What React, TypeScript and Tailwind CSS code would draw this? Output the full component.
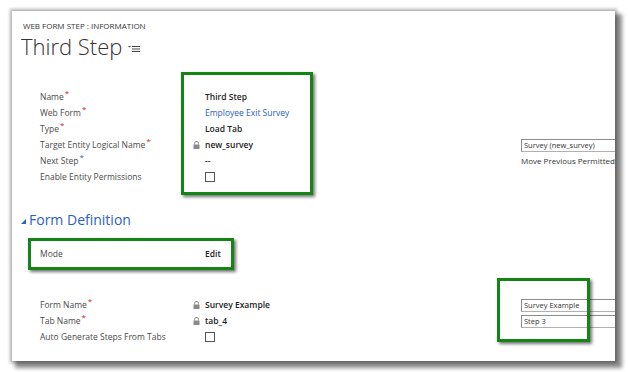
import React from "react";

const font = { fontFamily: '"Open Sans", "Noto Sans", Arial, sans-serif' };

function Lock() {
  return (
    <svg width="7" height="8" viewBox="0 0 7 8" className="block">
      <path d="M1.5 3.5V2.4a2 2 0 0 1 4 0v1.1" fill="none" stroke="#8a8a8a" strokeWidth="1" />
      <rect x="0.5" y="3.5" width="6" height="4.5" fill="#8a8a8a" />
    </svg>
  );
}

function Check() {
  return <div className="w-[10px] h-[10px] border border-[#555] bg-white" />;
}

function Req({ blue }: { blue?: boolean }) {
  return (
    <span className={`relative -top-[4px] ml-[1px] text-[8px] ${blue ? "text-[#2a62c0]" : "text-[#e0141e]"}`}>*</span>
  );
}

function Input({ text }: { text: string }) {
  return (
    <div className="w-[130px] h-[13px] border border-[#b0b0b0] border-t-[#8c8c8c] border-l-[#8c8c8c] bg-white text-[7.5px] leading-[11px] pl-[2px] text-[#333] whitespace-nowrap">
      {text}
    </div>
  );
}

type Row = {
  label: string;
  req?: "red" | "blue";
  lock?: boolean;
  value?: React.ReactNode;
  right?: React.ReactNode;
};

function Rows({ rows }: { rows: Row[] }) {
  return (
    <div className="grid grid-cols-[153px_12px_316px_1fr] pl-[28px] text-[8.5px]">
      {rows.map((r) => (
        <React.Fragment key={r.label}>
          <div className="h-[16px] flex items-center text-[#4a4a4a] whitespace-nowrap">
            {r.label}
            {r.req && <Req blue={r.req === "blue"} />}
          </div>
          <div className="h-[16px] flex items-center">{r.lock && <Lock />}</div>
          <div className="h-[16px] flex items-center font-semibold text-[#222]">{r.value}</div>
          <div className="h-[16px] flex items-center whitespace-nowrap">{r.right}</div>
        </React.Fragment>
      ))}
    </div>
  );
}

export default function App() {
  return (
    <div className="w-[628px] h-[372px] bg-white pl-[12px] pt-[11px]" style={font}>
      <div className="relative w-[603px] h-[350px] bg-white overflow-hidden shadow-[0_0_3px_2px_rgba(0,0,0,0.3),5px_5px_4px_2px_rgba(0,0,0,0.45)]">
        <div className="pl-[11px] pt-[10px]">
          <div className="text-[8px] leading-[10px] text-[#333]">WEB FORM STEP : INFORMATION</div>
          <div className="flex items-center gap-[6px] -ml-[2px]">
            <div className="text-[22px] leading-[30px] font-light text-[#333]">Third Step</div>
            <svg width="12" height="8" viewBox="0 0 12 8" className="mt-[5px]">
              <path d="M0 1h3L1.5 2.5z" fill="#444" />
              <path d="M4 1.5h8M4 4h8M4 6.5h8" stroke="#444" strokeWidth="1" />
            </svg>
          </div>
        </div>

        <div className="mt-[28px]">
          <Rows
            rows={[
              { label: "Name", req: "red", value: "Third Step" },
              {
                label: "Web Form",
                req: "red",
                value: <span className="font-normal text-[#2a62c0]">Employee Exit Survey</span>,
              },
              { label: "Type", req: "red", value: "Load Tab" },
              {
                label: "Target Entity Logical Name",
                req: "red",
                lock: true,
                value: "new_survey",
                right: <Input text="Survey (new_survey)" />,
              },
              {
                label: "Next Step",
                req: "blue",
                value: "--",
                right: <span className="text-[#333] text-[8px]">Move Previous Permitted</span>,
              },
              { label: "Enable Entity Permissions", value: <Check /> },
            ]}
          />
        </div>

        <div className="mt-[25px] flex items-center pl-[9px] h-[20px]">
          <svg width="5" height="5" viewBox="0 0 5 5" className="mr-[3px] mt-[3px]">
            <path d="M5 0V5H0z" fill="#2a62c0" />
          </svg>
          <div className="text-[14px] leading-[20px] text-[#2a62c0]">Form Definition</div>
        </div>

        <div className="mt-[8px] ml-[16px] w-[206px] h-[32px] border-[3px] border-[#148414] shadow-[2px_2px_3px_rgba(0,0,0,0.55)] flex items-center text-[8.5px]">
          <div className="w-[174px] pl-[9px] text-[#4a4a4a]">Mode</div>
          <div className="font-semibold text-[#222]">Edit</div>
        </div>

        <div className="mt-[27px]">
          <Rows
            rows={[
              {
                label: "Form Name",
                req: "red",
                lock: true,
                value: "Survey Example",
                right: <Input text="Survey Example" />,
              },
              {
                label: "Tab Name",
                req: "red",
                lock: true,
                value: "tab_4",
                right: <Input text="Step 3" />,
              },
              { label: "Auto Generate Steps From Tabs", value: <Check /> },
            ]}
          />
        </div>

        {/* annotation boxes */}
        <div className="absolute left-[169px] top-[61px] w-[132px] h-[123px] border-[3px] border-[#148414] shadow-[2px_2px_3px_rgba(0,0,0,0.55)]" />
        <div className="absolute left-[485px] top-[267px] w-[93px] h-[64px] border-[3px] border-[#148414] shadow-[2px_2px_3px_rgba(0,0,0,0.55)]" />
      </div>
    </div>
  );
}
